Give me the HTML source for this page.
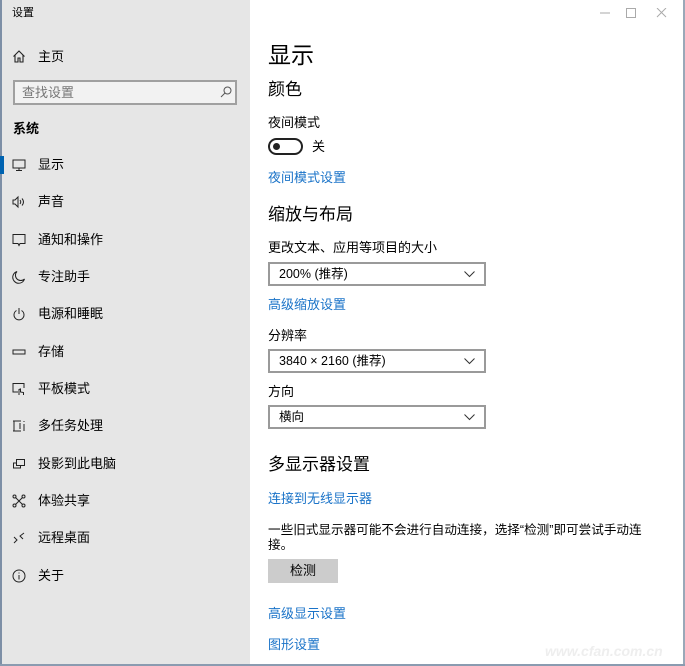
<!DOCTYPE html>
<html><head><meta charset="utf-8"><style>
*{margin:0;padding:0;box-sizing:border-box}
body{width:685px;height:666px;overflow:hidden;background:#fff;font-family:"Liberation Sans","Noto Sans CJK SC",sans-serif;color:#000;position:relative}
.side{position:absolute;left:0;top:0;width:250px;height:666px;background:#e6e6e6}
.lb{position:absolute;left:0;top:0;width:2px;height:666px;background:#7d8fa6}
.bb{position:absolute;left:0;bottom:0;width:685px;height:2px;background:#8a9bb0}
.rb{position:absolute;right:0;top:0;width:2px;height:666px;background:#9aa8b8}
.t{position:absolute;white-space:nowrap;line-height:1}
.it{position:absolute;left:38px;font-size:13px;line-height:1}
.ic{position:absolute;left:12px;width:14px;height:14px}
.link{color:#1a73c8;font-size:13px}
.dd{position:absolute;left:268px;width:218px;height:24px;border:2px solid #9a9a9a;font-size:12.5px;line-height:20px;padding:0 9px}
.dd svg{position:absolute;right:9px;top:7px}
</style></head><body>
<div class="side"></div>
<div class="lb"></div><div class="rb"></div><div class="bb"></div>
<div class="t" style="left:12px;top:8px;font-size:11px">设置</div>
<svg style="position:absolute;left:600px;top:8px" width="80" height="10"><line x1="0" y1="5" x2="10" y2="5" stroke="#aaa"/><rect x="26.5" y="0.5" width="9" height="9" fill="none" stroke="#aaa"/><path d="M57 0L66 9M66 0L57 9" stroke="#aaa"/></svg>
<svg class="ic" style="top:49px" viewBox="0 0 14 14"><path d="M1.5 7.5L7 2l5.5 5.5M3 6v7h3V9h2v4h3V6" fill="none" stroke="#222" stroke-width="1.1"/></svg>
<div class="t" style="left:38px;top:50px;font-size:13px">主页</div>
<div style="position:absolute;left:13px;top:80px;width:224px;height:25px;border:2px solid #a0a0a0;background:#f2f2f2"></div>
<div class="t" style="left:22px;top:86px;font-size:13px;color:#777">查找设置</div>
<svg style="position:absolute;left:220px;top:86px" width="12" height="12"><circle cx="7.5" cy="4.5" r="3.5" fill="none" stroke="#555"/><line x1="5" y1="7" x2="1" y2="11" stroke="#555"/></svg>
<div class="t" style="left:13px;top:122px;font-size:13px;font-weight:bold">系统</div>
<div style="position:absolute;left:0;top:156px;width:4px;height:18px;background:#0063b1"></div>
<svg class="ic" style="top:158px" viewBox="0 0 14 14"><rect x="1" y="2" width="12" height="8" fill="none" stroke="#222"/><path d="M7 10v2M4 12.5h6" stroke="#222"/></svg>
<div class="it" style="top:158px">显示</div>
<svg class="ic" style="top:195px" viewBox="0 0 14 14"><path d="M1 5h2l3-3v10L3 9H1z" fill="none" stroke="#222"/><path d="M8 5q1.5 2 0 4M10 3.5q3 3.5 0 7" fill="none" stroke="#222"/></svg>
<div class="it" style="top:195px">声音</div>
<svg class="ic" style="top:233px" viewBox="0 0 14 14"><path d="M1 1.5h12v9H8l-1 2-1-2H1z" fill="none" stroke="#222"/></svg>
<div class="it" style="top:233px">通知和操作</div>
<svg class="ic" style="top:270px" viewBox="0 0 14 14"><path d="M5 1.5A6 6 0 1 0 12.5 9 5 5 0 0 1 5 1.5z" fill="none" stroke="#222"/></svg>
<div class="it" style="top:270px">专注助手</div>
<svg class="ic" style="top:307px" viewBox="0 0 14 14"><path d="M4.5 3.5a5 5 0 1 0 5 0M7 1v6" fill="none" stroke="#222"/></svg>
<div class="it" style="top:307px">电源和睡眠</div>
<svg class="ic" style="top:345px" viewBox="0 0 14 14"><rect x="1" y="5" width="12" height="4" fill="none" stroke="#222"/></svg>
<div class="it" style="top:345px">存储</div>
<svg class="ic" style="top:382px" viewBox="0 0 14 14"><path d="M6 10H1V1.5h11V6" fill="none" stroke="#222"/><path d="M7 13V7.5l1.5-.5v3l3 .5v2.5" fill="none" stroke="#222"/></svg>
<div class="it" style="top:382px">平板模式</div>
<svg class="ic" style="top:419px" viewBox="0 0 14 14"><path d="M1 2h8M1 12h8M2 2v10M8 4v6M12 2v1M12 5v7" fill="none" stroke="#222"/></svg>
<div class="it" style="top:419px">多任务处理</div>
<svg class="ic" style="top:457px" viewBox="0 0 14 14"><rect x="4.5" y="2.5" width="8" height="6" fill="none" stroke="#222"/><path d="M4.5 6H1.5v5h7V8.5" fill="none" stroke="#222"/></svg>
<div class="it" style="top:457px">投影到此电脑</div>
<svg class="ic" style="top:494px" viewBox="0 0 14 14"><path d="M3 3l8 8M11 3l-8 8" stroke="#222"/><circle cx="2.5" cy="2.5" r="1.5" fill="#e6e6e6" stroke="#222"/><circle cx="11.5" cy="2.5" r="1.5" fill="#e6e6e6" stroke="#222"/><circle cx="2.5" cy="11.5" r="1.5" fill="#e6e6e6" stroke="#222"/><circle cx="11.5" cy="11.5" r="1.5" fill="#e6e6e6" stroke="#222"/></svg>
<div class="it" style="top:494px">体验共享</div>
<svg class="ic" style="top:531px" viewBox="0 0 14 14"><path d="M2 6l3 3-3 3M12 2l-4 3 3 3" fill="none" stroke="#222"/></svg>
<div class="it" style="top:531px">远程桌面</div>
<svg class="ic" style="top:569px" viewBox="0 0 14 14"><circle cx="7" cy="7" r="6" fill="none" stroke="#222"/><path d="M7 6v4.5M7 3.5v1" stroke="#222"/></svg>
<div class="it" style="top:569px">关于</div>

<div class="t" style="left:268px;top:44px;font-size:23px">显示</div>
<div class="t" style="left:268px;top:81px;font-size:17px">颜色</div>
<div class="t" style="left:268px;top:116px;font-size:13px">夜间模式</div>
<div style="position:absolute;left:268px;top:138px;width:35px;height:17px;border:2px solid #222;border-radius:9px"></div>
<div style="position:absolute;left:273px;top:143px;width:7px;height:7px;border-radius:50%;background:#222"></div>
<div class="t" style="left:312px;top:140px;font-size:13px">关</div>
<div class="t link" style="left:268px;top:171px">夜间模式设置</div>
<div class="t" style="left:268px;top:206px;font-size:17px">缩放与布局</div>
<div class="t" style="left:268px;top:241px;font-size:13px">更改文本、应用等项目的大小</div>
<div class="dd" style="top:262px">200% (推荐)<svg width="11" height="7"><path d="M0.5 0.5l5 5 5-5" fill="none" stroke="#333"/></svg></div>
<div class="t link" style="left:268px;top:298px">高级缩放设置</div>
<div class="t" style="left:268px;top:329px;font-size:13px">分辨率</div>
<div class="dd" style="top:349px">3840 × 2160 (推荐)<svg width="11" height="7"><path d="M0.5 0.5l5 5 5-5" fill="none" stroke="#333"/></svg></div>
<div class="t" style="left:268px;top:385px;font-size:13px">方向</div>
<div class="dd" style="top:405px">横向<svg width="11" height="7"><path d="M0.5 0.5l5 5 5-5" fill="none" stroke="#333"/></svg></div>
<div class="t" style="left:268px;top:456px;font-size:17px">多显示器设置</div>
<div class="t link" style="left:268px;top:492px">连接到无线显示器</div>
<div class="t" style="left:268px;top:524px;font-size:12.6px">一些旧式显示器可能不会进行自动连接，选择“检测”即可尝试手动连</div>
<div class="t" style="left:268px;top:539px;font-size:12.6px">接。</div>
<div style="position:absolute;left:268px;top:559px;width:70px;height:24px;background:#cccccc;font-size:13px;text-align:center;line-height:24px">检测</div>
<div class="t link" style="left:268px;top:607px">高级显示设置</div>
<div class="t link" style="left:268px;top:638px">图形设置</div>
<div class="t" style="left:545px;top:644px;font-size:14px;font-style:italic;color:#eeeeee;font-weight:bold">www.cfan.com.cn</div>
</body></html>
